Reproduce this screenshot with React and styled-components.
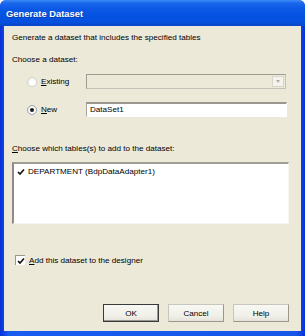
import React from "react";
import styled, { createGlobalStyle } from "styled-components";

const Global = createGlobalStyle`
  html, body { margin: 0; padding: 0; background: #ffffff; }
  body { font-family: "Liberation Sans", Arial, sans-serif; }
  * { box-sizing: border-box; }
`;

const Window = styled.div`
  width: 305px;
  height: 336px;
  display: flex;
  flex-direction: column;
  background: linear-gradient(90deg, #0831d9 0%, #1a5cf0 3%, #1657e8 97%, #0831d9 100%);
  border-radius: 6px 6px 0 0;
  padding: 0 4px 5px 4px;
  overflow: hidden;
`;

const TitleBar = styled.div`
  height: 26px;
  margin: 0 -4px;
  padding: 0 6px;
  display: flex;
  align-items: center;
  border-radius: 6px 6px 0 0;
  background: linear-gradient(180deg, #3d8cf7 0%, #1a67ee 12%, #0a58e4 35%, #0553e2 60%, #0650de 85%, #0a46c8 100%);
  color: #ffffff;
  font-weight: bold;
  font-size: 9.4px;
  text-shadow: 1px 1px 0 #0a3aa8;
`;

const Client = styled.div`
  flex: 1;
  background: #ece9d8;
  padding: 0 8px;
  display: flex;
  flex-direction: column;
  color: #000000;
  font-size: 8.1px;
`;

const Line = styled.div`
  height: 14px;
  line-height: 14px;
  margin-top: ${(p) => p.$mt}px;
  white-space: nowrap;
`;

const Key = styled.span`
  text-decoration: underline;
`;

const OptionRow = styled.div`
  height: 15px;
  margin-top: ${(p) => p.$mt}px;
  display: flex;
  align-items: center;
`;

const RadioLabel = styled.label`
  width: 74px;
  display: flex;
  align-items: center;
  padding-left: 15px;
  gap: 4px;
`;

const Radio = styled.span`
  width: 10px;
  height: 10px;
  border-radius: 50%;
  border: 1px solid ${(p) => (p.$checked ? "#9aa6b0" : "#d0d2cc")};
  background: radial-gradient(circle at 60% 60%, #ffffff 40%, #e6e6e0 100%);
  display: flex;
  align-items: center;
  justify-content: center;
  &::after {
    content: "";
    width: 4px;
    height: 4px;
    border-radius: 50%;
    background: ${(p) => (p.$checked ? "#1a1a1a" : "transparent")};
  }
`;

const Combo = styled.div`
  width: 200px;
  height: 15px;
  border: 1px solid #c4c2b8;
  border-top-color: #9e9c92;
  border-left-color: #9e9c92;
  background: #ece9d8;
  display: flex;
  justify-content: flex-end;
  padding: 1px;
`;

const DropButton = styled.div`
  width: 12px;
  height: 100%;
  background: #f4f3ee;
  border: 1px solid #d8d6cc;
  display: flex;
  align-items: center;
  justify-content: center;
  &::after {
    content: "";
    border-left: 2.5px solid transparent;
    border-right: 2.5px solid transparent;
    border-top: 3px solid #b0aea4;
  }
`;

const TextBox = styled.div`
  width: 201px;
  height: 15px;
  border: 1px solid #ffffff;
  border-top: 2px solid #9a988e;
  border-left: 1px solid #a8a69c;
  background: #ffffff;
  padding-left: 3px;
  line-height: 12px;
`;

const ListBox = styled.div`
  height: 62px;
  width: 277px;
  margin-top: 6px;
  background: #ffffff;
  border-top: 2px solid #a09e94;
  border-left: 2px solid #8e8c84;
  border-right: 1px solid #f6f5f0;
  border-bottom: 1px solid #f6f5f0;
  padding: 1px 3px;
`;

const ListItem = styled.div`
  height: 13px;
  display: flex;
  align-items: center;
  gap: 3px;
  white-space: nowrap;
`;

const Check = styled.svg`
  width: 8px;
  height: 8px;
  flex: none;
`;

const CheckRow = styled.label`
  height: 14px;
  margin-top: 29px;
  padding-left: 3px;
  display: flex;
  align-items: center;
  gap: 4px;
`;

const CheckBox = styled.span`
  width: 10px;
  height: 10px;
  background: #ffffff;
  border-top: 1px solid #9a988e;
  border-left: 1px solid #9a988e;
  display: flex;
  align-items: center;
  justify-content: center;
`;

const ButtonBar = styled.div`
  margin-top: 37px;
  display: flex;
  justify-content: flex-end;
  gap: 9px;
  padding-right: 4px;
`;

const Button = styled.div`
  width: 56px;
  height: 18px;
  display: flex;
  align-items: center;
  justify-content: center;
  background: linear-gradient(180deg, #f8f8f4 0%, #f0efe8 70%, #e4e2d8 100%);
  border: 1px solid ${(p) => (p.$default ? "#3a3a3a" : "#c8c6bc")};
  border-right-color: ${(p) => (p.$default ? "#3a3a3a" : "#9a988e")};
  border-bottom-color: ${(p) => (p.$default ? "#3a3a3a" : "#9a988e")};
  box-shadow: ${(p) => (p.$default ? "inset -1px -1px 0 #9a988e" : "none")};
`;

const CheckMark = () => (
  <Check viewBox="0 0 8 8">
    <path d="M1 4 L3 6 L7 1.5" stroke="#111" strokeWidth="1.6" fill="none" />
  </Check>
);

export default function App() {
  return (
    <>
      <Global />
      <Window>
        <TitleBar>Generate Dataset</TitleBar>
        <Client>
          <Line $mt={5}>Generate a dataset that includes the specified tables</Line>
          <Line $mt={8}>Choose a dataset:</Line>
          <OptionRow $mt={7}>
            <RadioLabel>
              <Radio />
              <span>
                <Key>E</Key>xisting
              </span>
            </RadioLabel>
            <Combo>
              <DropButton />
            </Combo>
          </OptionRow>
          <OptionRow $mt={13}>
            <RadioLabel>
              <Radio $checked />
              <span>
                <Key>N</Key>ew
              </span>
            </RadioLabel>
            <TextBox>DataSet1</TextBox>
          </OptionRow>
          <Line $mt={25}>
            <Key>C</Key>hoose which tables(s) to add to the dataset:
          </Line>
          <ListBox>
            <ListItem>
              <CheckMark />
              <span>DEPARTMENT (BdpDataAdapter1)</span>
            </ListItem>
          </ListBox>
          <CheckRow>
            <CheckBox>
              <CheckMark />
            </CheckBox>
            <span>
              <Key>A</Key>dd this dataset to the designer
            </span>
          </CheckRow>
          <ButtonBar>
            <Button $default>OK</Button>
            <Button>Cancel</Button>
            <Button>Help</Button>
          </ButtonBar>
        </Client>
      </Window>
    </>
  );
}
